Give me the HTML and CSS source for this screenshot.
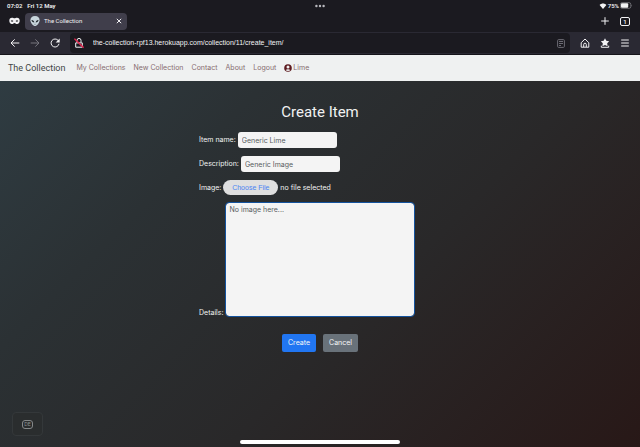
FILE: index.html
```html
<!DOCTYPE html>
<html lang="en">
<head>
<meta charset="utf-8">
<meta name="viewport" content="width=device-width, initial-scale=1">
<title>The Collection</title>
<link rel="stylesheet" href="styles.css">
</head>
<body>
<header class="browser">
  <div class="status">
    <div class="status-time"><span>07:02</span><span>Fri 12 May</span></div>
    <svg class="dots" viewBox="0 0 12 4" width="12" height="4" aria-hidden="true"><circle cx="2.4" cy="2" r="1.2"/><circle cx="6" cy="2" r="1.2"/><circle cx="9.6" cy="2" r="1.2"/></svg>
    <div class="status-power">
      <svg viewBox="0 0 8 6" width="8" height="6" aria-hidden="true"><path fill="currentColor" d="M4 6 .6 2C2.500 0 5.500 0 7.400 2z"/></svg>
      <span>75%</span>
      <svg viewBox="0 0 13 7" width="13" height="7" aria-hidden="true"><rect x=".4" y=".7" width="10.400" height="5.600" rx="1.700" fill="none" stroke="#8c8c92" stroke-width=".7"/><rect x="1" y="1.200" width="7.200" height="4.600" rx="1" fill="currentColor"/><path d="M11.500 2.700q1.200.9 0 1.800z" fill="#8c8c92"/></svg>
    </div>
  </div>
  <div class="tabs">
    <svg class="mask" viewBox="0 0 11 8" width="11" height="8" aria-hidden="true"><path fill="currentColor" fill-rule="evenodd" d="M3 .7c1.100 0 1.700.6 2.500.6S6.900.7 8 .7c1.800 0 2.700 1.300 2.700 3S9.700 7.100 8.100 7.100C6.800 7.100 6.300 5.900 5.500 5.900S4.200 7.100 2.900 7.100C1.300 7.100.3 5.400.3 3.700S1.200.7 3 .7zM1.700 4q1.500 1.500 2.700.1Q3 2.300 1.700 4zm4.900.1Q7.800 5.500 9.300 4 8 2.300 6.600 4.100z"/></svg>
    <div class="tab">
      <svg viewBox="0 0 10 10" width="10" height="10" aria-hidden="true"><path fill="#c8d5dc" d="M5 0c3 0 4.600 1.700 4.600 4.200C9.600 7 6.700 10 5 10S.4 7 .4 4.200C.4 1.700 2 0 5 0z"/><path fill="#20272c" d="M1.500 4c1.500-.1 2.700.9 2.800 2.500C2.700 6.500 1.600 5.600 1.500 4zm7 0C7 3.900 5.800 4.900 5.700 6.500 7.300 6.500 8.400 5.600 8.500 4z"/><path d="M4.200 8.300h1.600" stroke="#59656c" stroke-width=".5"/></svg>
      <span class="tab-title">The Collection</span>
      <button class="icon-button" aria-label="Close tab"><svg viewBox="0 0 6 6" width="6" height="6"><path class="line" d="m.8.8 4.400 4.400m0-4.400L.8 5.200"/></svg></button>
    </div>
    <div class="tab-actions">
      <button class="icon-button" aria-label="New tab"><svg viewBox="0 0 10 10" width="10" height="10"><path class="line" d="M5 1.200v7.600M1.200 5h7.600"/></svg></button>
      <button class="tab-count" aria-label="Open tabs">1</button>
    </div>
  </div>
  <div class="toolbar">
    <button class="icon-button" aria-label="Back"><svg viewBox="0 0 10 10" width="10" height="10"><path class="line" d="M9.300 5H1m3.700-3.600L1 5l3.700 3.600"/></svg></button>
    <button class="icon-button dim" aria-label="Forward"><svg viewBox="0 0 10 10" width="10" height="10"><path class="line" d="M.7 5H9M5.300 1.400 9 5 5.300 8.600"/></svg></button>
    <button class="icon-button" aria-label="Reload"><svg viewBox="0 0 10 10" width="10" height="10"><path class="line" d="M8.200 2.500A4 4 0 1 0 9 5.800"/><path fill="currentColor" d="M9.700.5v4H5.700z"/></svg></button>
    <div class="address">
      <svg viewBox="0 0 10 12" width="10" height="12" aria-hidden="true"><path class="line" d="M3 5.500V3.400a2 2 0 0 1 4 0v2.100M1.700 5.900h6.600v4.300H1.700z"/><path d="m.4 1.700 9.200 9" stroke="#e22850" stroke-width="1.400"/></svg>
      <input class="url" type="text" aria-label="Address" value="the-collection-rpf13.herokuapp.com/collection/11/create_item/">
      <button class="icon-button faint" aria-label="Reader view"><svg viewBox="0 0 8 9" width="8" height="9"><rect class="line" x=".6" y=".6" width="6.800" height="7.800" rx="1"/><path class="line" d="M2 2.500h4M2 4.500h4M2 6.500h2"/></svg></button>
    </div>
    <div class="tools">
      <button class="icon-button" aria-label="Home"><svg viewBox="0 0 10 10" width="10" height="10"><path class="line" d="M1.200 4.700 5 1l3.800 3.700v4.500H1.200z" stroke-linejoin="round"/><path class="line" d="M3.700 9V6.500a1.300 1.300 0 0 1 2.600 0V9"/></svg></button>
      <button class="icon-button" aria-label="Bookmarks"><svg viewBox="0 0 10 10" width="10" height="10"><path fill="currentColor" d="m5 .2 1.300 2.500 2.900.5-2 2.100.4 2.900L5 6.900 2.400 8.200l.4-2.900-2-2.100 2.900-.5z"/><path class="line" d="M1.300 7.700v1.600h7.400V7.700"/></svg></button>
      <button class="icon-button" aria-label="Menu"><svg viewBox="0 0 10 10" width="10" height="10"><path class="line" d="M1.200 2h7.600M1.200 5h7.600M1.200 8h7.600"/></svg></button>
    </div>
  </div>
</header>
<nav class="site-nav">
  <a class="brand" href="#">The Collection</a>
  <a href="#">My Collections</a>
  <a href="#">New Collection</a>
  <a href="#">Contact</a>
  <a href="#">About</a>
  <a href="#">Logout</a>
  <a class="user" href="#"><svg viewBox="0 0 8 8" width="8" height="8" aria-hidden="true"><circle cx="4" cy="4" r="3.800" fill="#5c1a1f"/><circle cx="4" cy="3" r="1.500" fill="#eff1f1"/><path d="M1.700 6.300q.4-1.100 2.300-1.100t2.300 1.100Q5.500 7.100 4 7.100T1.700 6.300z" fill="#eff1f1"/></svg>Lime</a>
</nav>
<main class="page">
  <h1>Create Item</h1>
  <form class="item-form">
    <div class="field"><label for="name">Item name:</label><input class="text" id="name" type="text" value="Generic Lime"></div>
    <div class="field"><label for="description">Description:</label><input class="text" id="description" type="text" value="Generic Image"></div>
    <div class="field"><label for="image">Image:</label><input class="file" id="image" type="file"><span>no file selected</span></div>
    <div class="field details"><label for="details">Details:</label><textarea id="details">No image here...</textarea></div>
    <div class="actions"><button class="button primary" type="submit">Create</button><button class="button" type="button">Cancel</button></div>
  </form>
</main>
<button class="keyboard" aria-label="Keyboard language"><span>DE</span></button>
<div class="home-bar"></div>
</body>
</html>
```
FILE: styles.css
```css
* { box-sizing: border-box; }

body {
  margin: 0;
  min-height: 100vh;
  display: flex;
  flex-direction: column;
  background: linear-gradient(135deg, #303f46 0%, #2b3134 32%, #292829 62%, #281817 100%);
  color: #f1f2f2;
  font: 7px/10px Inter, Roboto, sans-serif;
}

button, input, textarea { font: inherit; }
svg { display: block; flex: none; }
.line { fill: none; stroke: currentColor; stroke-width: 1; }

.browser { background: #1b1a20; color: #f2f2f4; font-family: Roboto, sans-serif; }

.status {
  display: grid;
  grid-template-columns: 1fr auto 1fr;
  align-items: center;
  height: 11px;
  padding: 0 7px;
  font-size: 6px;
  font-weight: 600;
}
.status-time { display: flex; gap: 5px; }
.dots { fill: #b9b9be; }
.status-power { display: flex; align-items: center; justify-content: flex-end; gap: 1px; }

.tabs { display: flex; align-items: center; height: 21px; padding: 0 10px 1px 9px; }
.tab {
  display: flex;
  align-items: center;
  gap: 4px;
  width: 102px;
  height: 17px;
  margin-left: 5px;
  padding: 0 5px;
  border-radius: 4px;
  background: #403e4b;
  font-size: 6px;
}
.tab-title { flex: 1; }
.icon-button {
  display: block;
  padding: 0;
  border: 0;
  background: none;
  color: #f2f2f4;
}
.dim { color: #77767f; }
.faint { color: #6c6b73; }
.tab-actions { display: flex; align-items: center; gap: 10px; margin-left: auto; }
.tab-count {
  width: 10px;
  height: 9px;
  padding: 0;
  border: 1px solid #f2f2f4;
  border-radius: 2px;
  background: none;
  color: #f2f2f4;
  font-size: 6px;
  line-height: 7px;
  font-weight: 600;
}

.toolbar {
  display: flex;
  align-items: center;
  gap: 10px;
  height: 23px;
  padding: 0 10px;
  background: #2a2933;
  border-bottom: 1px solid #15141a;
}
.address {
  display: flex;
  flex: 1;
  align-items: center;
  height: 20px;
  padding: 0 5px 0 4px;
  border-radius: 4px;
  background: #1b1a20;
}
.url {
  flex: 1;
  min-width: 0;
  margin-left: 9px;
  padding: 0;
  border: 0;
  background: none;
  color: #f2f2f4;
  font-family: "Liberation Sans", sans-serif;
}
.tools { display: flex; gap: 10px; }

.site-nav {
  display: flex;
  align-items: center;
  gap: 8px;
  height: 26px;
  padding: 0 8px;
  background: #eff1f1;
}
.site-nav a { color: #876d70; text-decoration: none; }
.site-nav .brand { margin-right: 3px; color: #414445; font-family: Roboto, sans-serif; font-size: 9px; }
.site-nav .user { display: flex; align-items: center; gap: 1px; }

.page { padding: 22px 16px; }
h1 {
  margin: 0 0 11px;
  font-family: Roboto, sans-serif;
  font-size: 15px;
  line-height: 18px;
  font-weight: 400;
  text-align: center;
}
.item-form { width: 242px; max-width: 100%; margin: 0 auto; }
.field { display: flex; align-items: center; gap: 2px; margin-bottom: 8px; }
.text, textarea {
  border: 0;
  border-radius: 3px;
  background: #f4f4f4;
  color: #585c60;
}
.text { width: 99px; height: 16px; padding: 0 4px; }
.file { width: 55px; height: 15px; overflow: hidden; font-size: 0; }
.file::file-selector-button {
  width: 55px;
  height: 15px;
  margin: 0;
  padding: 0;
  border: 0;
  border-radius: 8px;
  background: #dfdfdf;
  color: #4b83f2;
  font-size: 7px;
}
.details { align-items: flex-end; }
.details label { line-height: 6px; }
textarea {
  width: 188px;
  height: 113px;
  padding: 2px 4px;
  outline: 1px solid #14539e;
  resize: none;
}
.actions { display: flex; justify-content: center; gap: 7px; padding-top: 10px; }
.button {
  height: 18px;
  padding: 0 6px;
  border: 0;
  border-radius: 2px;
  background: #69727a;
  color: #f4f6f8;
}
.primary { background: #2176f2; }

.keyboard {
  position: fixed;
  left: 12px;
  bottom: 11px;
  display: grid;
  place-items: center;
  width: 31px;
  height: 24px;
  padding: 0;
  border: 1px solid #34383a;
  border-radius: 4px;
  background: #2a2d2e;
  color: #929596;
}
.keyboard span {
  padding: 0 1px;
  border: 1px solid #858889;
  border-radius: 3px;
  font-size: 5px;
  line-height: 7px;
}
.home-bar {
  position: fixed;
  left: 50%;
  bottom: 3px;
  width: 160px;
  height: 4px;
  transform: translateX(-50%);
  border-radius: 2px;
  background: #fff;
}
```
